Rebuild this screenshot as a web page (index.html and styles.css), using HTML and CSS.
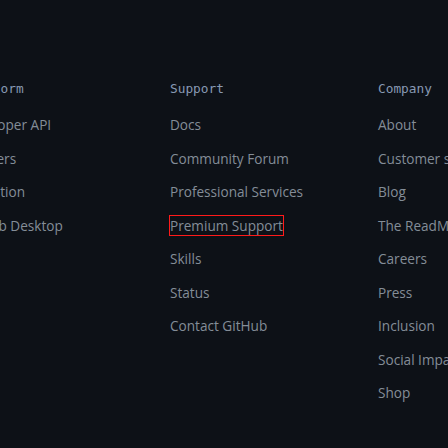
FILE: index.html
```html
<!DOCTYPE html>
<html>
<head>
<meta charset="utf-8">
<link rel="stylesheet" href="styles.css">
</head>
<body>
<div class="footer">
  <div class="col">
    <h2 class="head">Platform</h2>
    <ul class="links">
      <li><a class="link">Developer API</a></li>
      <li><a class="link">Partners</a></li>
      <li><a class="link">Education</a></li>
      <li><a class="link">GitHub Desktop</a></li>
    </ul>
  </div>
  <div class="col">
    <h2 class="head">Support</h2>
    <ul class="links">
      <li><a class="link">Docs</a></li>
      <li><a class="link">Community Forum</a></li>
      <li><a class="link">Professional Services</a></li>
      <li><a class="link focus">Premium Support</a></li>
      <li><a class="link">Skills</a></li>
      <li><a class="link">Status</a></li>
      <li><a class="link">Contact GitHub</a></li>
    </ul>
  </div>
  <div class="col">
    <h2 class="head">Company</h2>
    <ul class="links">
      <li><a class="link">About</a></li>
      <li><a class="link">Customer stories</a></li>
      <li><a class="link">Blog</a></li>
      <li><a class="link">The ReadME Project</a></li>
      <li><a class="link">Careers</a></li>
      <li><a class="link">Press</a></li>
      <li><a class="link">Inclusion</a></li>
      <li><a class="link">Social Impact</a></li>
      <li><a class="link">Shop</a></li>
    </ul>
  </div>
</div>
</body>
</html>
```
FILE: styles.css
```css
html, body {
  margin: 0;
  padding: 0;
  background: #0d1117;
  height: 100%;
  overflow: hidden;
}
.footer {
  display: flex;
  margin-left: -38px;
  padding-top: 79px;
}
.col {
  width: 208px;
  flex: none;
}
.head {
  margin: 0;
  font-family: "DejaVu Sans Mono", monospace;
  font-weight: normal;
  font-size: 12.8px;
  line-height: 20px;
  color: #8799b3;
}
.links {
  list-style: none;
  margin: 16px 0 0;
  padding: 0;
}
.links li {
  line-height: 20px;
  margin-bottom: 13.5px;
}
.link {
  font-family: "Open Sans", sans-serif;
  font-size: 13.6px;
  color: #848d97;
}
.focus {
  outline: 1px solid #ff1a1a;
}
```
